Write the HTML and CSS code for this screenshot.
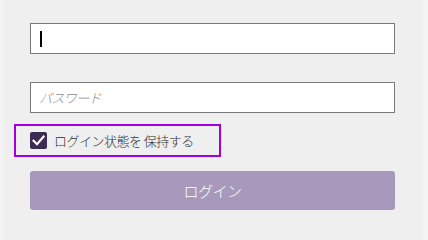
FILE: index.html
```html
<!DOCTYPE html>
<html lang="ja">
<head>
<meta charset="utf-8">
<link rel="stylesheet" href="styles.css">
</head>
<body>
<div class="panel">
  <form class="form">
    <div class="field"><span class="caret"></span></div>
    <div class="field field-pw"><span class="placeholder">パスワード</span></div>
    <div class="remember">
      <span class="check">
        <svg width="17" height="17" viewBox="0 0 17 17"><path d="M3.6 8.8 L7 12.2 L13.6 4.6" fill="none" stroke="#fff" stroke-width="2.2" stroke-linecap="square"/></svg>
      </span>
      <span class="remember-label">ログイン状態を 保持する</span>
    </div>
    <div class="button">ログイン</div>
  </form>
</div>
</body>
</html>
```
FILE: styles.css
```css
html, body {
  margin: 0;
  padding: 0;
  height: 100%;
  overflow: hidden;
  background: #f3f3f3;
  font-family: "Noto Sans CJK JP", "Noto Sans", sans-serif;
}
.panel {
  margin-left: 4px;
  width: 419px;
  height: 100%;
  min-height: 223px;
  background: #efefef;
  overflow: hidden;
}
.form {
  display: flex;
  flex-direction: column;
  margin: 0;
  padding: 23px 0 0 26px;
  width: 365px;
}
.field {
  box-sizing: border-box;
  height: 31px;
  background: #fff;
  border: 1.5px solid #7a7a7a;
  display: flex;
  align-items: center;
  padding-left: 8px;
}
.field-pw {
  margin-top: 28px;
}
.caret {
  width: 1.5px;
  height: 16px;
  background: #000;
  margin-left: 1px;
}
.placeholder {
  font-size: 13px;
  font-weight: 300;
  color: #8c8c8c;
  font-style: italic;
  letter-spacing: -0.6px;
  line-height: 1;
  margin-top: -1px;
}
.remember {
  box-sizing: border-box;
  margin: 11px 0 0 -16px;
  width: 207px;
  height: 33px;
  border: 2px solid #a100df;
  display: flex;
  align-items: center;
  padding-left: 14px;
  gap: 7px;
}
.check {
  width: 17px;
  height: 17px;
  background: #3c2b55;
  border-radius: 2px;
  display: flex;
}
.remember-label {
  font-size: 13px;
  font-weight: 300;
  color: #2e2e2e;
  letter-spacing: -0.5px;
  line-height: 1;
  margin-top: -1px;
}
.button {
  margin-top: 14px;
  height: 39px;
  background: #a699bb;
  border-radius: 3px;
  color: #fff;
  font-size: 15px;
  font-weight: 300;
  display: flex;
  align-items: center;
  justify-content: center;
  letter-spacing: -0.5px;
}
```
